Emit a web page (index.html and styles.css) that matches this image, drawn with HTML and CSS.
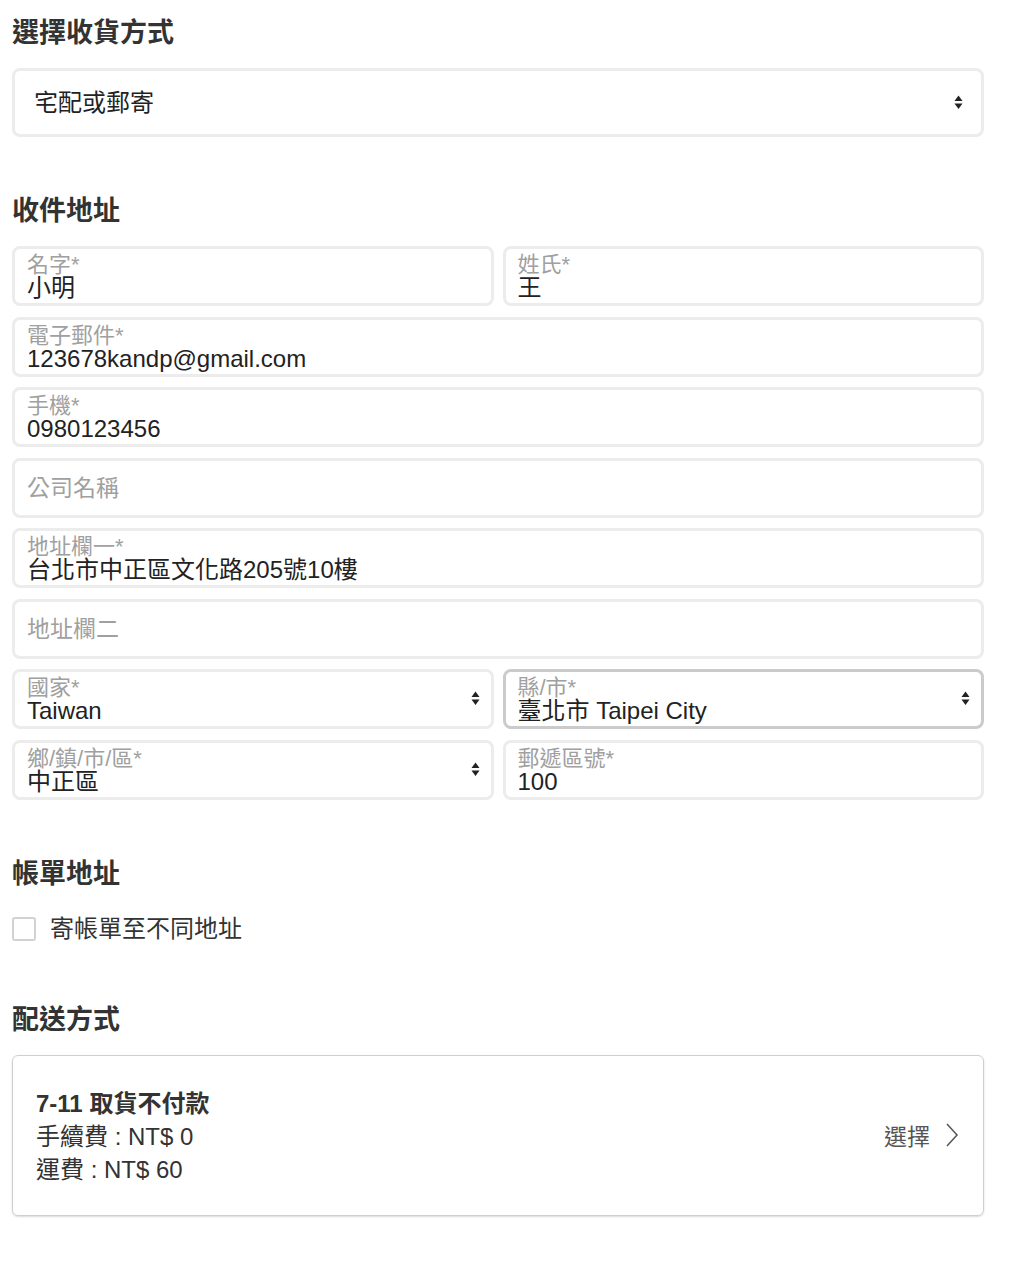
FILE: index.html
```html
<!DOCTYPE html>
<html lang="zh-Hant">
<head>
<meta charset="utf-8">
<title>結帳</title>
<link rel="stylesheet" href="styles.css">
</head>
<body>
<div class="page">
  <section class="section">
    <h2 class="heading">選擇收貨方式</h2>
    <div class="select-box">
      <span class="select-text">宅配或郵寄</span>
      <svg class="arrows" width="9" height="15" viewBox="0 0 9 15"><path d="M4.5 0.5 L8.5 6 L0.5 6 Z M0.5 8.5 L8.5 8.5 L4.5 14 Z" fill="#222"/></svg>
    </div>
  </section>

  <section class="section">
    <h2 class="heading">收件地址</h2>
    <div class="fields">
      <div class="field"><span class="label">名字*</span><span class="value">小明</span></div>
      <div class="field"><span class="label">姓氏*</span><span class="value">王</span></div>
      <div class="field full"><span class="label">電子郵件*</span><span class="value">123678kandp@gmail.com</span></div>
      <div class="field full"><span class="label">手機*</span><span class="value">0980123456</span></div>
      <div class="field full empty"><span class="placeholder">公司名稱</span></div>
      <div class="field full"><span class="label">地址欄一*</span><span class="value">台北市中正區文化路205號10樓</span></div>
      <div class="field full empty"><span class="placeholder">地址欄二</span></div>
      <div class="field select-field"><span class="label">國家*</span><span class="value">Taiwan</span>
        <svg class="arrows" width="9" height="15" viewBox="0 0 9 15"><path d="M4.5 0.5 L8.5 6 L0.5 6 Z M0.5 8.5 L8.5 8.5 L4.5 14 Z" fill="#222"/></svg></div>
      <div class="field select-field focused"><span class="label">縣/市*</span><span class="value">臺北市 Taipei City</span>
        <svg class="arrows" width="9" height="15" viewBox="0 0 9 15"><path d="M4.5 0.5 L8.5 6 L0.5 6 Z M0.5 8.5 L8.5 8.5 L4.5 14 Z" fill="#222"/></svg></div>
      <div class="field select-field"><span class="label">鄉/鎮/市/區*</span><span class="value">中正區</span>
        <svg class="arrows" width="9" height="15" viewBox="0 0 9 15"><path d="M4.5 0.5 L8.5 6 L0.5 6 Z M0.5 8.5 L8.5 8.5 L4.5 14 Z" fill="#222"/></svg></div>
      <div class="field"><span class="label">郵遞區號*</span><span class="value">100</span></div>
    </div>
  </section>

  <section class="section">
    <h2 class="heading">帳單地址</h2>
    <label class="check-row"><span class="checkbox"></span><span class="check-text">寄帳單至不同地址</span></label>
  </section>

  <section class="section">
    <h2 class="heading">配送方式</h2>
    <div class="ship-card">
      <div class="ship-info">
        <div class="ship-title">7-11 取貨不付款</div>
        <div class="ship-line">手續費 : NT$ 0</div>
        <div class="ship-line">運費 : NT$ 60</div>
      </div>
      <div class="ship-choose">
        <span>選擇</span>
        <svg width="14" height="24" viewBox="0 0 14 24"><polyline points="2,1 12,12 2,23" fill="none" stroke="#555" stroke-width="1.5"/></svg>
      </div>
    </div>
  </section>
</div>
</body>
</html>
```

FILE: styles.css
```css
* { box-sizing: border-box; }

html, body {
  margin: 0;
  padding: 0;
  background: #fff;
}

body {
  font-family: "Liberation Sans", "Noto Sans CJK TC", sans-serif;
  color: #222;
}

.page {
  width: 972px;
  margin-left: 12px;
  padding-top: 16px;
  padding-bottom: 40px;
}

.section {
  margin-bottom: 57px;
}

.heading {
  margin: 0 0 18px 0;
  font-size: 27px;
  line-height: 34px;
  font-weight: bold;
  color: #333;
}

.select-box {
  height: 69px;
  border: 3px solid #ececec;
  border-radius: 8px;
  display: flex;
  align-items: center;
  justify-content: space-between;
  padding: 0 18px 0 19px;
}

.select-text {
  font-size: 24px;
  line-height: 28px;
  color: #222;
}

.fields {
  display: grid;
  grid-template-columns: 1fr 1fr;
  column-gap: 9px;
  row-gap: 10.5px;
}

.field {
  position: relative;
  height: 60px;
  border: 3px solid #ececec;
  border-radius: 8px;
  padding: 5px 12px 0 12px;
  display: flex;
  flex-direction: column;
  background: #fff;
}

.field.full {
  grid-column: 1 / span 2;
}

.field.focused {
  border-color: #cbcbcb;
}

.label {
  font-size: 22px;
  line-height: 21px;
  color: #a0a0a0;
  white-space: nowrap;
}

.value {
  font-size: 24px;
  line-height: 26px;
  color: #222;
  white-space: nowrap;
}

.field.empty {
  padding-top: 0;
  justify-content: center;
}

.placeholder {
  font-size: 23px;
  line-height: 28px;
  color: #a0a0a0;
}

.select-field .arrows {
  position: absolute;
  right: 11px;
  top: 19px;
}

.check-row {
  display: flex;
  align-items: center;
  gap: 14px;
  height: 34px;
  margin-top: 21px;
}

.checkbox {
  width: 24px;
  height: 24px;
  border: 2px solid #d2d2d2;
  border-radius: 3px;
  background: #fff;
}

.check-text {
  font-size: 24px;
  line-height: 34px;
  color: #333;
}

.ship-card {
  height: 161px;
  border: 1px solid #cfcfcf;
  border-radius: 6px;
  box-shadow: 0 1px 2px rgba(0, 0, 0, 0.15);
  display: flex;
  align-items: center;
  justify-content: space-between;
  padding: 4px 24px 0 23px;
}

.ship-info {
  font-size: 24px;
  color: #333;
}

.ship-title {
  font-weight: bold;
  line-height: 32px;
}

.ship-line {
  line-height: 33px;
}

.ship-choose {
  display: flex;
  align-items: center;
  gap: 15px;
  font-size: 23px;
  color: #555;
  margin-top: -4px;
}
```
